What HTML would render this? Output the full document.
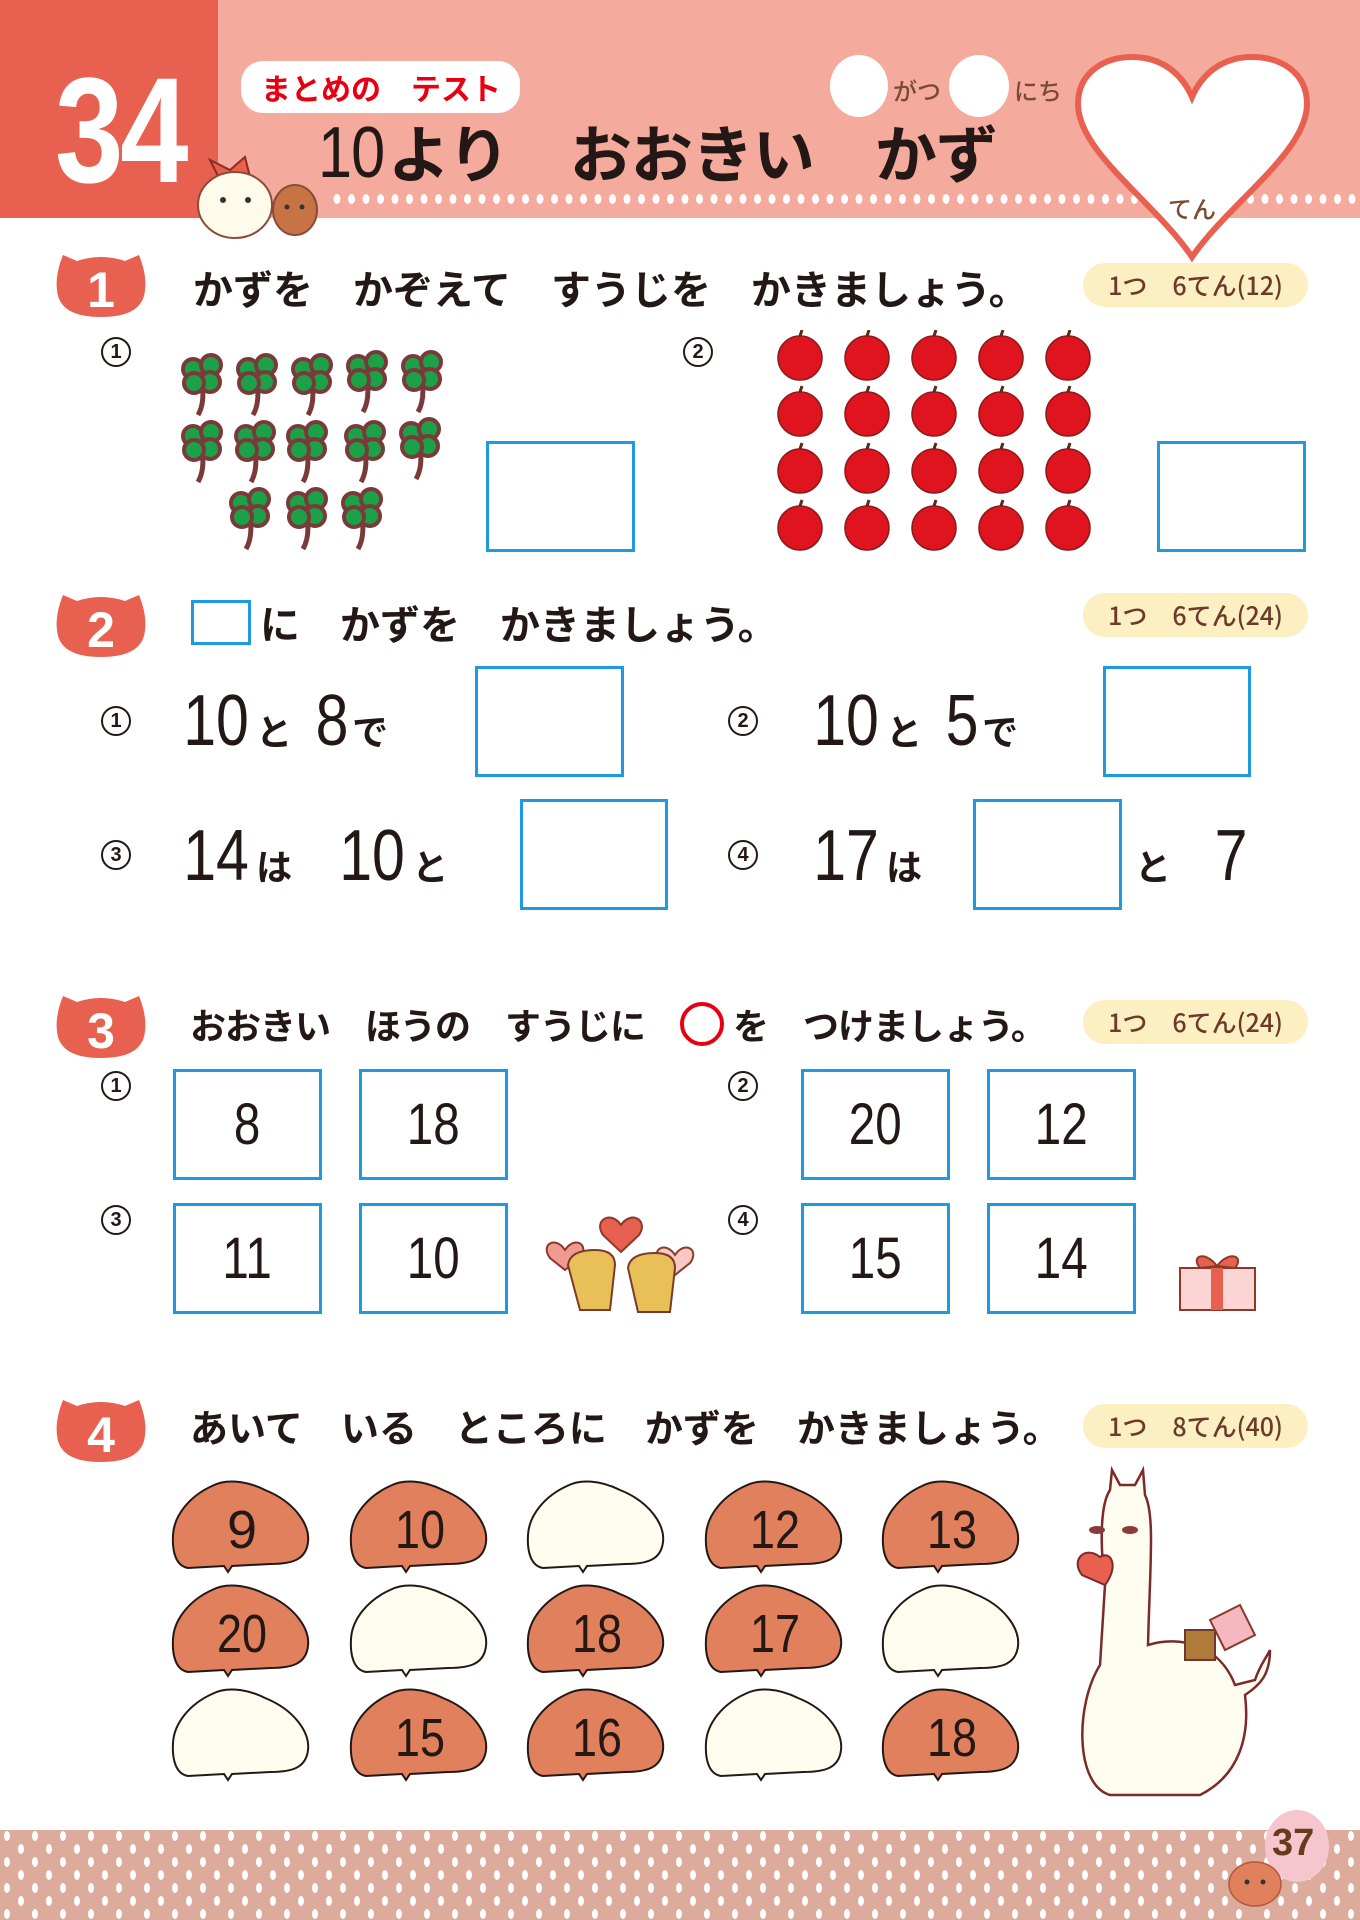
<!DOCTYPE html>
<html><head><meta charset="utf-8">
<style>
*{margin:0;padding:0;box-sizing:border-box}
body{width:1360px;height:1920px;position:relative;background:#fff;overflow:hidden;font-family:"Liberation Sans","Noto Sans CJK JP",sans-serif;color:#231815}
.a{position:absolute}
.jp{font-family:"Noto Sans CJK JP","Liberation Sans",sans-serif;font-weight:bold;white-space:nowrap}
.box{position:absolute;border:3px solid #1e9be0;background:#fff}
.cn{position:absolute;width:30px;height:30px;border:2px solid #231815;border-radius:50%;font-size:20px;line-height:26px;text-align:center;font-weight:bold;font-family:"Liberation Sans",sans-serif}
.score{position:absolute;left:1083px;width:225px;height:44px;background:#fcefc2;border-radius:22px;color:#6b3a2a;font-size:25px;line-height:44px;text-align:center;font-family:"Noto Sans CJK JP",sans-serif;font-weight:500}
.num{position:absolute;font-family:"Liberation Sans",sans-serif;font-size:72px;line-height:1;color:#231815;white-space:nowrap}
.d{display:inline-block;transform:scaleX(0.82);transform-origin:center}
.bn{position:absolute;font-family:"Liberation Sans",sans-serif;font-size:58px;line-height:1;text-align:center}
.sm{font-family:"Noto Sans CJK JP",sans-serif;font-size:36px;font-weight:bold}
</style></head><body>
<div class="a" style="left:0;top:0;width:1360px;height:218px;background:#f4aa9c"></div>
<div class="a" style="left:0;top:0;width:218px;height:218px;background:#e8604f"></div>
<svg class="a" style="left:330px;top:192px" width="1030" height="14">
<pattern id="dp" width="14.5" height="14" patternUnits="userSpaceOnUse"><ellipse cx="7" cy="7" rx="3.5" ry="5" fill="#fff"/></pattern><rect width="1030" height="14" fill="url(#dp)"/></svg>
<div class="a" style="left:55px;top:48px;font-size:150px;font-weight:bold;color:#fff;font-family:'Liberation Sans',sans-serif;transform:scaleX(0.82);transform-origin:left;line-height:1.1;letter-spacing:-4px">34</div>
<div class="a jp" style="left:241px;top:61px;width:279px;height:52px;background:#fff;border-radius:22px;color:#e60012;font-size:30px;line-height:52px;padding-left:20px">まとめの　テスト</div>
<div class="a jp" style="left:318px;top:110px;font-size:62px;line-height:80px;color:#231815;letter-spacing:-1px"><span style="font-family:'Liberation Sans';font-weight:normal;font-size:72px;display:inline-block;transform:scaleX(0.85);transform-origin:left;margin-right:-8px">10</span>より　おおきい　かず</div>
<svg class="a" style="left:190px;top:145px" width="140" height="95">
<path d="M30,35 L20,15 L40,25 L55,12 L60,32 Z" fill="#e8604f" stroke="#8b2d22" stroke-width="2"/>
<ellipse cx="45" cy="60" rx="37" ry="33" fill="#fffbea" stroke="#8b4b3a" stroke-width="2"/>
<ellipse cx="105" cy="65" rx="22" ry="25" fill="#c77346" stroke="#8b4b3a" stroke-width="2"/>
<circle cx="33" cy="55" r="3" fill="#333"/><circle cx="58" cy="55" r="3" fill="#333"/>
<circle cx="97" cy="62" r="2.5" fill="#333"/><circle cx="112" cy="62" r="2.5" fill="#333"/>
</svg>
<div class="a" style="left:830px;top:55px;width:58px;height:62px;border-radius:50%;background:#fff"></div>
<div class="a jp" style="left:893px;top:72px;font-size:24px;color:#7a4a33;font-weight:500">がつ</div>
<div class="a" style="left:949px;top:55px;width:60px;height:62px;border-radius:50%;background:#fff"></div>
<div class="a jp" style="left:1014px;top:72px;font-size:24px;color:#7a4a33;font-weight:500">にち</div>
<svg class="a" style="left:1070px;top:52px" width="245" height="210"><path d="M122,205 C85,150 8,100 8,52 C8,20 35,5 62,5 C92,5 112,22 122,45 C132,22 152,5 182,5 C210,5 237,20 237,52 C237,100 160,150 122,205 Z" fill="#fff" stroke="#e8604f" stroke-width="6"/></svg>
<div class="a jp" style="left:1168px;top:190px;font-size:24px;color:#7a4a33;font-weight:500">てん</div>

<svg width="0" height="0" style="position:absolute"><defs><path id="bd" d="M8,10 L22,16 Q46,8 70,16 L84,10 Q92,30 90,45 Q88,72 46,72 Q4,72 2,45 Q0,30 8,10 Z"/></defs></svg>

<svg class="a" style="left:55px;top:245px" width="94" height="74"><use href="#bd" fill="#e8604f"/><text x="46" y="62" text-anchor="middle" font-size="50" font-weight="bold" fill="#fff" font-family="Liberation Sans">1</text></svg>
<div class="a jp" style="left:193px;top:262px;font-size:40px;line-height:50px">かずを　かぞえて　すうじを　かきましょう。</div>
<div class="score" style="top:263px">1つ　6てん(12)</div>
<div class="cn" style="left:101px;top:337px">1</div>
<svg class="a" style="left:170px;top:340px" width="290" height="210">
<defs><g id="cl"><path d="M0,10 Q3,30 -4,42" stroke="#7b3a3a" stroke-width="5" fill="none"/><g fill="#1ca048" stroke="#7b3a3a" stroke-width="4"><circle cx="-9" cy="-4" r="10"/><circle cx="9" cy="-8" r="10"/><circle cx="8" cy="9" r="10"/><circle cx="-8" cy="10" r="10"/></g></g></defs>
<use href="#cl" x="32" y="33"/><use href="#cl" x="87" y="33"/><use href="#cl" x="142" y="33"/><use href="#cl" x="197" y="30"/><use href="#cl" x="252" y="30"/>
<use href="#cl" x="32" y="100"/><use href="#cl" x="85" y="100"/><use href="#cl" x="137" y="100"/><use href="#cl" x="195" y="100"/><use href="#cl" x="250" y="97"/>
<use href="#cl" x="80" y="167"/><use href="#cl" x="137" y="167"/><use href="#cl" x="192" y="167"/>
</svg>
<div class="box" style="left:486px;top:441px;width:149px;height:111px"></div>
<div class="cn" style="left:683px;top:337px">2</div>
<svg class="a" style="left:770px;top:330px" width="330" height="225">
<defs><g id="ap"><circle r="22" fill="#e0141e" stroke="#8b1a1a" stroke-width="1.5"/><path d="M0,-22 L2,-28" stroke="#5a2a1a" stroke-width="3"/></g></defs>
<use href="#ap" x="30" y="28"/><use href="#ap" x="97" y="28"/><use href="#ap" x="164" y="28"/><use href="#ap" x="231" y="28"/><use href="#ap" x="298" y="28"/>
<use href="#ap" x="30" y="84"/><use href="#ap" x="97" y="84"/><use href="#ap" x="164" y="84"/><use href="#ap" x="231" y="84"/><use href="#ap" x="298" y="84"/>
<use href="#ap" x="30" y="141"/><use href="#ap" x="97" y="141"/><use href="#ap" x="164" y="141"/><use href="#ap" x="231" y="141"/><use href="#ap" x="298" y="141"/>
<use href="#ap" x="30" y="198"/><use href="#ap" x="97" y="198"/><use href="#ap" x="164" y="198"/><use href="#ap" x="231" y="198"/><use href="#ap" x="298" y="198"/>
</svg>
<div class="box" style="left:1157px;top:441px;width:149px;height:111px"></div>

<svg class="a" style="left:55px;top:585px" width="94" height="74"><use href="#bd" fill="#e8604f"/><text x="46" y="62" text-anchor="middle" font-size="50" font-weight="bold" fill="#fff" font-family="Liberation Sans">2</text></svg>
<div class="box" style="left:191px;top:600px;width:60px;height:45px"></div>
<div class="a jp" style="left:260px;top:597px;font-size:40px;line-height:50px">に　かずを　かきましょう。</div>
<div class="score" style="top:593px">1つ　6てん(24)</div>

<div class="cn" style="left:101px;top:706px">1</div>
<div class="num" style="left:176px;top:685px"><span class="d">10</span><span class="sm">と</span> <span class="d">8</span><span class="sm">で</span></div>
<div class="box" style="left:475px;top:666px;width:149px;height:111px"></div>
<div class="cn" style="left:728px;top:706px">2</div>
<div class="num" style="left:806px;top:685px"><span class="d">10</span><span class="sm">と</span> <span class="d">5</span><span class="sm">で</span></div>
<div class="box" style="left:1103px;top:666px;width:148px;height:111px"></div>

<div class="cn" style="left:101px;top:840px">3</div>
<div class="num" style="left:176px;top:820px"><span class="d">14</span><span class="sm">は</span>&nbsp; <span class="d">10</span><span class="sm">と</span></div>
<div class="box" style="left:520px;top:799px;width:148px;height:111px"></div>
<div class="cn" style="left:728px;top:840px">4</div>
<div class="num" style="left:806px;top:820px"><span class="d">17</span><span class="sm">は</span></div>
<div class="box" style="left:973px;top:799px;width:149px;height:111px"></div>
<div class="num" style="left:1135px;top:820px"><span class="sm">と</span>&nbsp; <span class="d">7</span></div>

<svg class="a" style="left:55px;top:986px" width="94" height="74"><use href="#bd" fill="#e8604f"/><text x="46" y="62" text-anchor="middle" font-size="50" font-weight="bold" fill="#fff" font-family="Liberation Sans">3</text></svg>
<div class="a jp" style="left:190px;top:999px;font-size:36px;line-height:50px;letter-spacing:-1px">おおきい　ほうの　すうじに</div>
<div class="a" style="left:680px;top:1002px;width:44px;height:44px;border:4px solid #e60012;border-radius:50%"></div>
<div class="a jp" style="left:733px;top:999px;font-size:36px;line-height:50px;letter-spacing:-1px">を　つけましょう。</div>
<div class="score" style="top:1000px">1つ　6てん(24)</div>
<div class="cn" style="left:101px;top:1071px">1</div>
<div class="cn" style="left:728px;top:1071px">2</div>
<div class="cn" style="left:101px;top:1205px">3</div>
<div class="cn" style="left:728px;top:1205px">4</div>
<div class="box bn" style="left:173px;top:1069px;width:149px;height:111px;line-height:105px"><span class="d">8</span></div>
<div class="box bn" style="left:359px;top:1069px;width:149px;height:111px;line-height:105px"><span class="d">18</span></div>
<div class="box bn" style="left:801px;top:1069px;width:149px;height:111px;line-height:105px"><span class="d">20</span></div>
<div class="box bn" style="left:987px;top:1069px;width:149px;height:111px;line-height:105px"><span class="d">12</span></div>
<div class="box bn" style="left:173px;top:1203px;width:149px;height:111px;line-height:105px"><span class="d">11</span></div>
<div class="box bn" style="left:359px;top:1203px;width:149px;height:111px;line-height:105px"><span class="d">10</span></div>
<div class="box bn" style="left:801px;top:1203px;width:149px;height:111px;line-height:105px"><span class="d">15</span></div>
<div class="box bn" style="left:987px;top:1203px;width:149px;height:111px;line-height:105px"><span class="d">14</span></div>
<svg class="a" style="left:535px;top:1210px" width="180" height="110">
<path d="M30,40 C20,25 5,35 15,48 L30,60 L45,48 C55,35 40,25 30,40Z" fill="#f19a90" stroke="#8b3a2a" stroke-width="2"/>
<path d="M140,45 C130,30 115,40 125,53 L140,65 L155,53 C165,40 150,30 140,45Z" fill="#f8c8c4" stroke="#8b3a2a" stroke-width="2"/>
<path d="M33,55 Q35,40 60,40 Q80,40 80,55 L75,100 L45,100 Z" fill="#e9bf58" stroke="#7b3a2a" stroke-width="2"/>
<path d="M93,58 Q95,43 120,43 Q140,43 140,58 L135,102 L103,102 Z" fill="#e9bf58" stroke="#7b3a2a" stroke-width="2"/>
<path d="M86,15 C76,0 58,10 68,25 L86,42 L104,25 C114,10 96,0 86,15Z" fill="#e8604f" stroke="#8b3a2a" stroke-width="2"/>
</svg>
<svg class="a" style="left:1175px;top:1248px" width="90" height="65">
<rect x="5" y="20" width="75" height="42" fill="#fbd4d4" stroke="#8b3a2a" stroke-width="2"/><rect x="36" y="20" width="12" height="42" fill="#e8604f"/>
<path d="M42,18 C30,2 15,8 25,20 Z M42,18 C54,2 70,8 60,20 Z" fill="#e8604f" stroke="#8b3a2a" stroke-width="2"/></svg>

<svg class="a" style="left:55px;top:1390px" width="94" height="74"><use href="#bd" fill="#e8604f"/><text x="46" y="62" text-anchor="middle" font-size="50" font-weight="bold" fill="#fff" font-family="Liberation Sans">4</text></svg>
<div class="a jp" style="left:190px;top:1401px;font-size:38px;line-height:50px">あいて　いる　ところに　かずを　かきましょう。</div>
<div class="score" style="top:1404px">1つ　8てん(40)</div>
<svg width="0" height="0" style="position:absolute"><defs><path id="bun" d="M42,6 C55,-1 75,0 95,10 C125,22 140,45 138,62 C136,80 122,84 100,84 L62,86 L58,92 L54,86 L18,88 C6,86 2,72 3,55 C4,35 20,16 42,6 Z"/></defs></svg>
<svg class="a" style="left:170px;top:1480px" width="900" height="320">
<g stroke="#231815" stroke-width="2">
<use href="#bun" x="0" y="0" fill="#e0805c"/><use href="#bun" x="178" y="0" fill="#e0805c"/><use href="#bun" x="355" y="0" fill="#fffdf0"/><use href="#bun" x="533" y="0" fill="#e0805c"/><use href="#bun" x="710" y="0" fill="#e0805c"/>
<use href="#bun" x="0" y="104" fill="#e0805c"/><use href="#bun" x="178" y="104" fill="#fffdf0"/><use href="#bun" x="355" y="104" fill="#e0805c"/><use href="#bun" x="533" y="104" fill="#e0805c"/><use href="#bun" x="710" y="104" fill="#fffdf0"/>
<use href="#bun" x="0" y="208" fill="#fffdf0"/><use href="#bun" x="178" y="208" fill="#e0805c"/><use href="#bun" x="355" y="208" fill="#e0805c"/><use href="#bun" x="533" y="208" fill="#fffdf0"/><use href="#bun" x="710" y="208" fill="#e0805c"/>
</g>
<g font-family="Liberation Sans" font-size="54" text-anchor="middle" fill="#231815" textLength="">
<text x="72" y="68">9</text><text x="250" y="68" textLength="50" lengthAdjust="spacingAndGlyphs">10</text><text x="605" y="68" textLength="50" lengthAdjust="spacingAndGlyphs">12</text><text x="782" y="68" textLength="50" lengthAdjust="spacingAndGlyphs">13</text>
<text x="72" y="172" textLength="50" lengthAdjust="spacingAndGlyphs">20</text><text x="427" y="172" textLength="50" lengthAdjust="spacingAndGlyphs">18</text><text x="605" y="172" textLength="50" lengthAdjust="spacingAndGlyphs">17</text>
<text x="250" y="276" textLength="50" lengthAdjust="spacingAndGlyphs">15</text><text x="427" y="276" textLength="50" lengthAdjust="spacingAndGlyphs">16</text><text x="782" y="276" textLength="50" lengthAdjust="spacingAndGlyphs">18</text>
</g></svg>
<svg class="a" style="left:1070px;top:1465px" width="265" height="340">
<path d="M40,330 C5,320 5,240 30,200 L35,120 C30,80 30,40 40,25 L42,5 L50,20 L65,20 L73,5 L75,30 C85,50 80,100 78,180 C110,170 150,180 165,220 L185,215 C190,200 195,195 200,185 C200,210 190,220 175,230 C180,270 170,310 130,330 Z" fill="#fffdf0" stroke="#7b2a2a" stroke-width="2.5"/>
<path d="M12,110 C0,95 15,80 30,92 C40,85 50,100 35,120 Z" fill="#e8604f" stroke="#7b2a2a" stroke-width="2"/>
<ellipse cx="27" cy="65" rx="8" ry="4" fill="#8b3a3a"/><ellipse cx="60" cy="65" rx="8" ry="4" fill="#8b3a3a"/>
<rect x="115" y="165" width="30" height="30" fill="#b07a3a" stroke="#6b3a2a" stroke-width="2"/>
<path d="M140,155 L170,140 L185,170 L155,185 Z" fill="#f5b8c0" stroke="#8b3a2a" stroke-width="2"/>
</svg>

<svg class="a" style="left:0;top:1830px" width="1360" height="90">
<defs><pattern id="fp" width="28" height="26" patternUnits="userSpaceOnUse"><rect width="28" height="26" fill="#dcab9b"/><ellipse cx="7" cy="6" rx="3" ry="5" fill="#fff"/><ellipse cx="21" cy="19" rx="3" ry="5" fill="#fff"/></pattern></defs>
<rect width="1360" height="90" fill="url(#fp)"/></svg>
<div class="a" style="left:1265px;top:1810px;width:64px;height:72px;border-radius:50%;background:#f6c6cf"></div>
<div class="a" style="left:1272px;top:1822px;font-size:38px;font-weight:bold;color:#6b3a1a;font-family:'Liberation Sans',sans-serif">37</div>
<svg class="a" style="left:1225px;top:1850px" width="60" height="60"><ellipse cx="30" cy="34" rx="26" ry="22" fill="#e0805c" stroke="#b05a3a" stroke-width="1.5"/><circle cx="22" cy="32" r="2.5" fill="#333"/><circle cx="38" cy="32" r="2.5" fill="#333"/></svg>
</body></html>
